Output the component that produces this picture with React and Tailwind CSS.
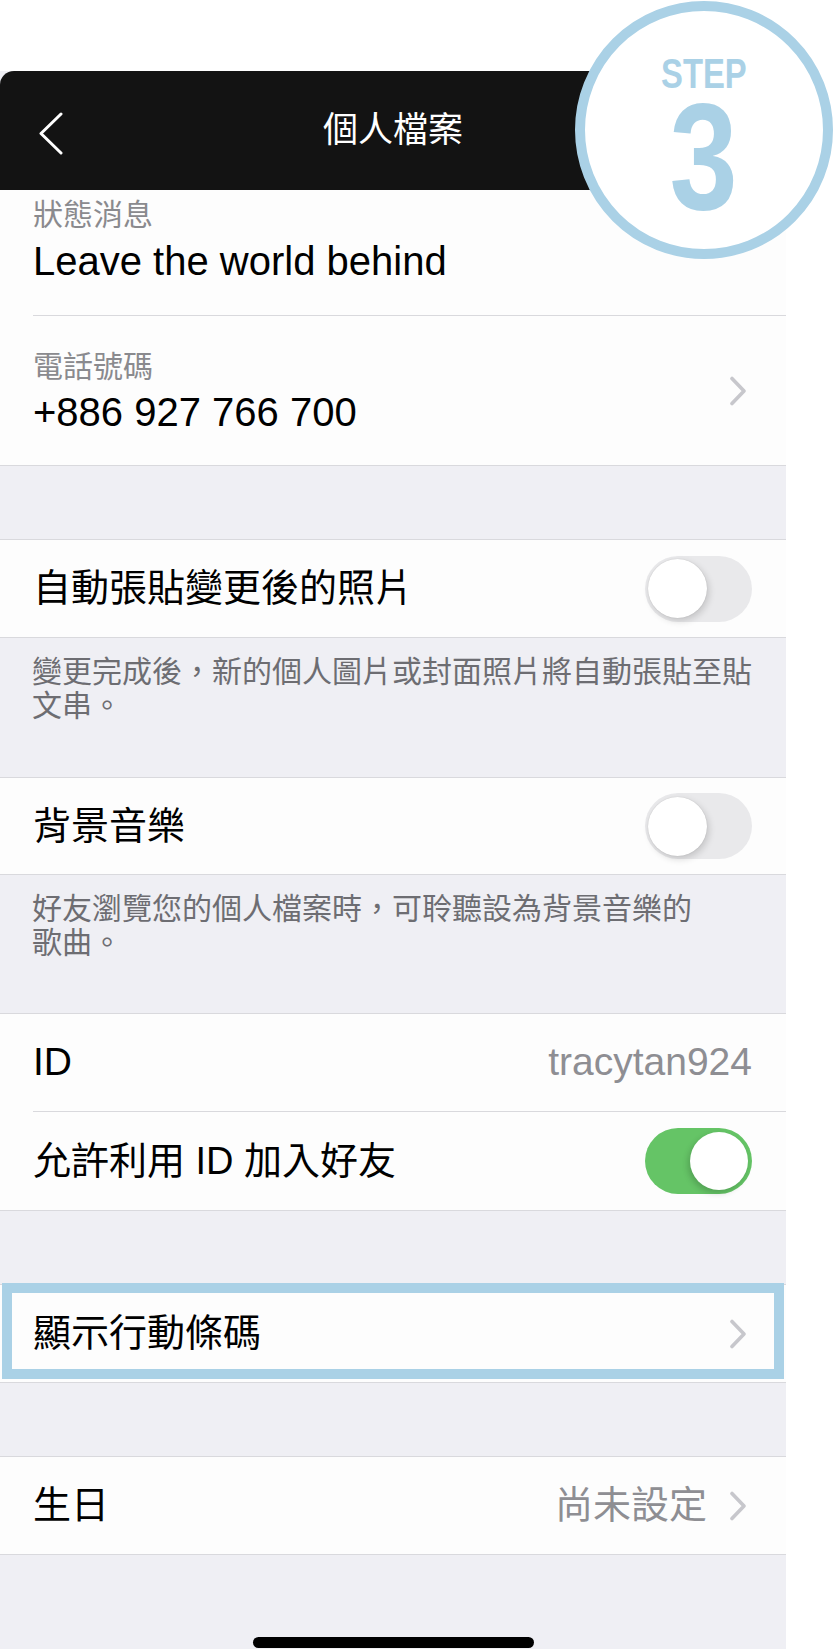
import React from "react";

function Chevron() {
    return (
        <svg width="18" height="30" viewBox="0 0 18 30" className="shrink-0">
            <path d="M3 2.5 L15 15 L3 27.5" fill="none" stroke="#c7c7cc" strokeWidth="3.6" strokeLinecap="round" strokeLinejoin="round" />
        </svg>
    );
}

function Toggle({ on }) {
    if (on) {
        return (
            <div className="w-[107px] h-[66px] rounded-full bg-[#65c466] flex items-center justify-end px-[4px] shrink-0">
                <div className="w-[58px] h-[58px] rounded-full bg-white shadow-[-2px_3px_6px_rgba(0,0,0,0.18)]" />
            </div>
        );
    }
    return (
        <div className="w-[107px] h-[66px] rounded-full bg-[#e9e9eb] flex items-center px-[3px] shrink-0">
            <div className="w-[59px] h-[59px] rounded-full bg-white shadow-[2px_3px_7px_rgba(0,0,0,0.16),0_0_1px_rgba(0,0,0,0.2)]" />
        </div>
    );
}

function Line() {
    return <div className="h-px bg-[#d9d9dd]" />;
}

function InsetLine() {
    return <div className="h-px bg-[#d9d9dd] ml-[33px]" />;
}

function ToggleRow({ label, on, height }) {
    return (
        <div className={`${height} bg-[#fdfdfd] flex items-center justify-between pl-[33px] pr-[34px]`}>
            <span className="text-[38px] text-black">{label}</span>
            <Toggle on={on} />
        </div>
    );
}

function Footer({ children, height }) {
    return (
        <div className={`${height} bg-[#efeff4] pl-[32px] pt-[17px] text-[30px] leading-[34px] text-[#6d6d72] whitespace-nowrap`}>
            {children}
        </div>
    );
}

export default function App() {
    return (
        <div className="relative w-[833px] h-[1649px] overflow-hidden bg-white font-['Liberation_Sans','Noto_Sans_CJK_TC',sans-serif]">
            <div className="h-[71px]" />

            <div className="w-[786px] bg-[#efeff4]">
                {/* nav bar */}
                <div className="h-[119px] bg-[#131313] rounded-tl-[14px] relative flex items-center justify-center">
                    <svg width="26" height="44" viewBox="0 0 26 44" className="absolute left-[38px] top-[41px]">
                        <path d="M23 2 L3 21.5 L23 41" fill="none" stroke="white" strokeWidth="3" strokeLinecap="round" strokeLinejoin="round" />
                    </svg>
                    <span className="text-white text-[35px]">個人檔案</span>
                </div>

                {/* status */}
                <div className="h-[125px] bg-[#fdfdfd] pl-[33px] pt-[5px]">
                    <div className="text-[30px] leading-[40px] text-[#8a8a8e]">狀態消息</div>
                    <div className="text-[40px] leading-[52px] text-black">Leave the world behind</div>
                </div>
                <div className="bg-[#fdfdfd]"><InsetLine /></div>

                {/* phone */}
                <div className="h-[149px] bg-[#fdfdfd] flex items-center justify-between pl-[33px] pr-[39px]">
                    <div className="pt-[2px]">
                        <div className="text-[30px] leading-[40px] text-[#8a8a8e]">電話號碼</div>
                        <div className="text-[40px] leading-[50px] text-black">+886 927 766 700</div>
                    </div>
                    <Chevron />
                </div>
                <Line />

                <div className="h-[73px]" />
                <Line />
                <ToggleRow label="自動張貼變更後的照片" height="h-[97px]" />
                <Line />
                <Footer height="h-[139px]">
                    變更完成後，新的個人圖片或封面照片將自動張貼至貼<br />文串。
                </Footer>
                <Line />
                <ToggleRow label="背景音樂" height="h-[96px]" />
                <Line />
                <Footer height="h-[138px]">
                    好友瀏覽您的個人檔案時，可聆聽設為背景音樂的<br />歌曲。
                </Footer>
                <Line />

                {/* ID */}
                <div className="h-[97px] bg-[#fdfdfd] flex items-center justify-between pl-[33px] pr-[34px]">
                    <span className="text-[39px] text-black">ID</span>
                    <span className="text-[39px] text-[#8e8e93]">tracytan924</span>
                </div>
                <div className="bg-[#fdfdfd]"><InsetLine /></div>
                <ToggleRow label="允許利用 ID 加入好友" on height="h-[98px]" />
                <Line />

                <div className="h-[73px]" />
                <Line />
                {/* barcode */}
                <div className="relative h-[97px] bg-[#fdfdfd] flex items-center justify-between pl-[33px] pr-[39px]">
                    <span className="text-[38px] text-black">顯示行動條碼</span>
                    <Chevron />
                    <div className="absolute left-[2px] right-[2px] top-[-2px] bottom-[3px] border-[10px] border-[#aad1e6]" />
                </div>
                <Line />

                <div className="h-[73px]" />
                <Line />
                {/* birthday */}
                <div className="h-[97px] bg-[#fdfdfd] flex items-center justify-between pl-[33px] pr-[39px]">
                    <span className="text-[38px] text-black">生日</span>
                    <div className="flex items-center gap-[22px]">
                        <span className="text-[38px] text-[#8e8e93]">尚未設定</span>
                        <Chevron />
                    </div>
                </div>
                <Line />

                <div className="h-[94px] pt-[82px]">
                    <div className="mx-auto w-[281px] h-[11px] rounded-full bg-black" />
                </div>
            </div>

            {/* step badge */}
            <div className="absolute left-[575px] top-[1px] w-[258px] h-[258px] rounded-full border-[10px] border-[#aad1e6] bg-white flex flex-col items-center">
                <div className="mt-[47px] text-[42px] leading-[32px] font-bold text-[#aad1e6] scale-x-[0.78]">STEP</div>
                <div className="mt-[10px] text-[153px] leading-[112px] font-bold text-[#aad1e6] scale-x-[0.8]">3</div>
            </div>
        </div>
    );
}
